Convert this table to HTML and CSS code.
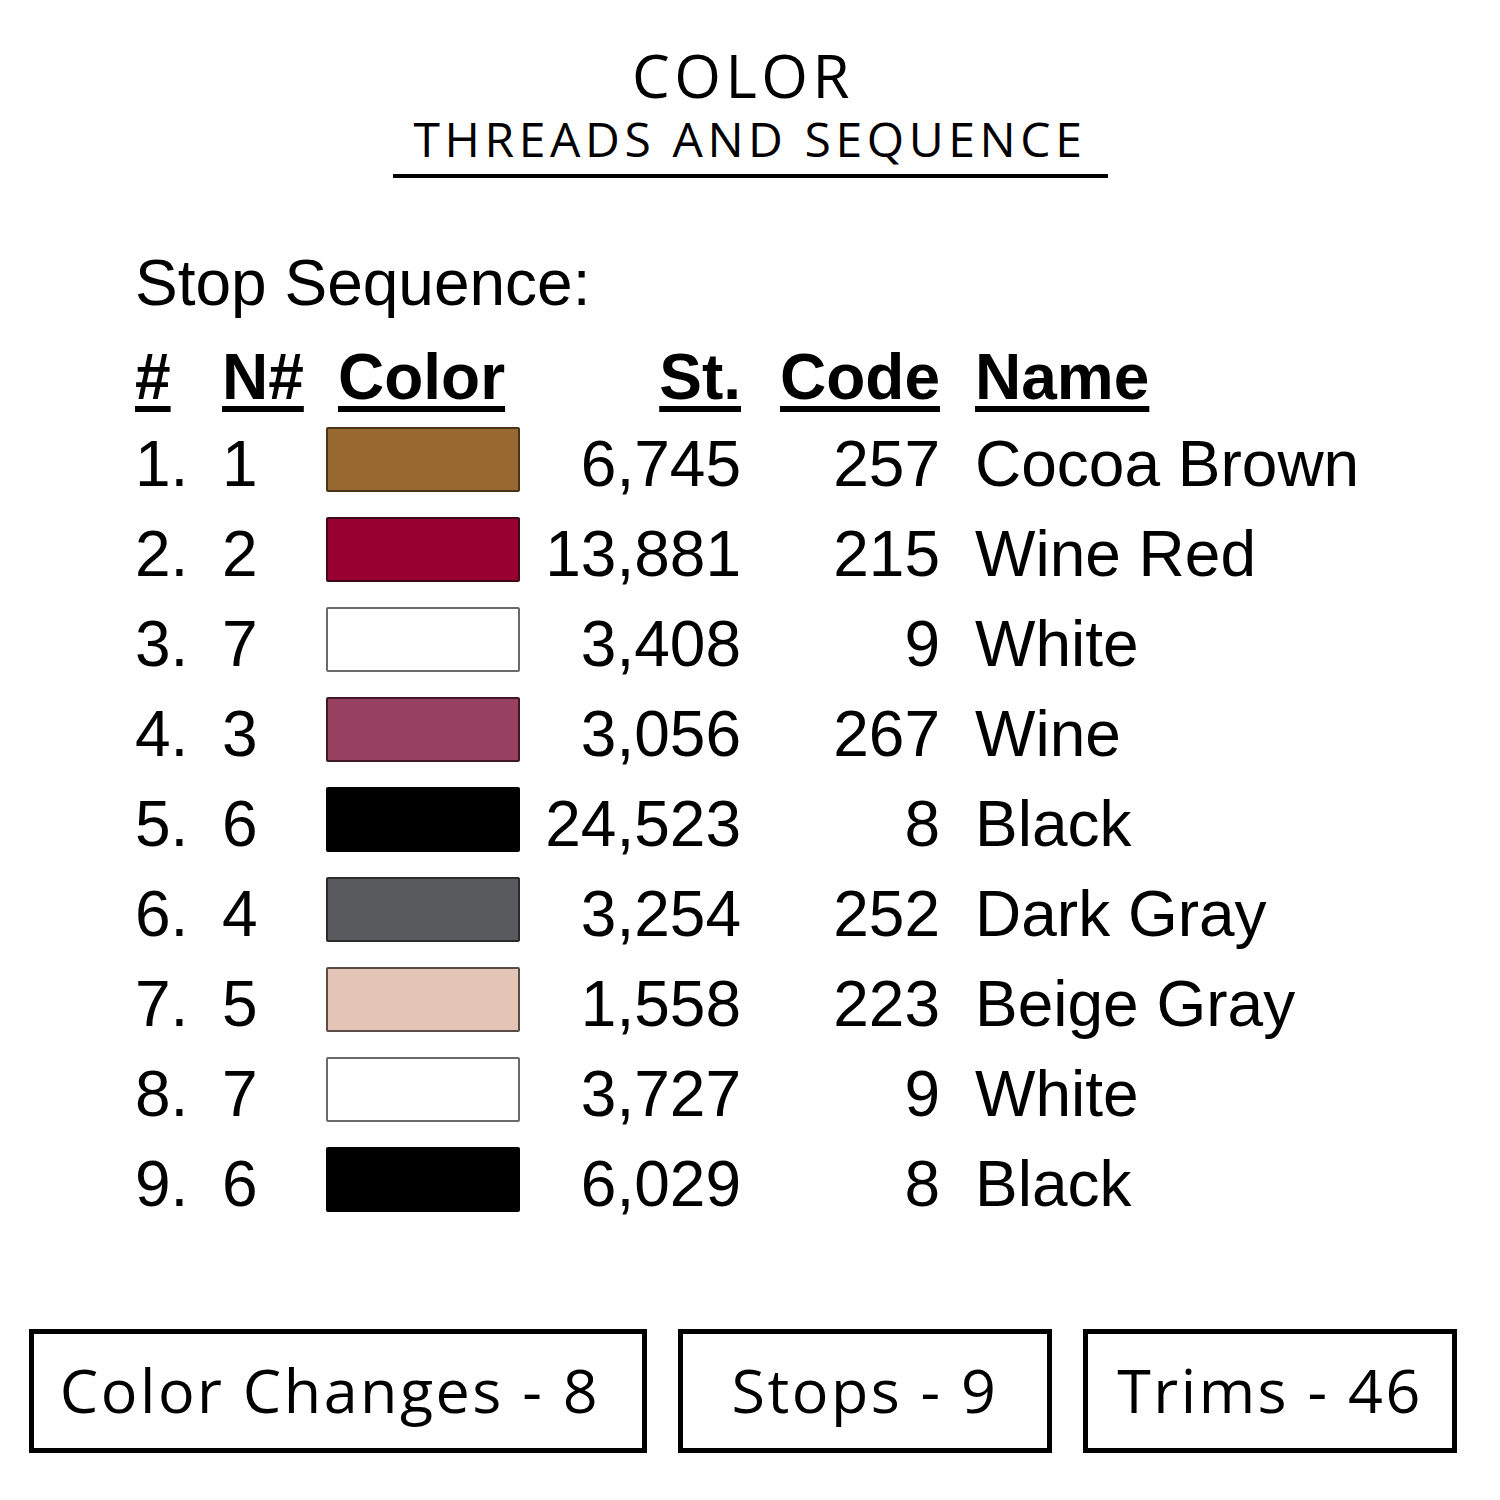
FILE: index.html
```html
<!DOCTYPE html>
<html>
<head>
<meta charset="utf-8">
<link rel="stylesheet" href="styles.css">
</head>
<body>
<div class="page">
  <header class="title">
    <div class="title-main">COLOR</div>
    <div class="title-sub">THREADS AND SEQUENCE</div>
  </header>

  <section class="sequence">
    <div class="seq-label">Stop Sequence:</div>
    <div class="table">
      <div class="row head">
        <span class="c-num"><u>#</u></span>
        <span class="c-n"><u>N#</u></span>
        <span class="c-color"><u>Color</u></span>
        <span class="c-st"><u>St.</u></span>
        <span class="c-code"><u>Code</u></span>
        <span class="c-name"><u>Name</u></span>
      </div>
      <div class="row">
        <span class="c-num">1.</span><span class="c-n">1</span>
        <span class="c-color"><i class="sw sw-brown"></i></span>
        <span class="c-st">6,745</span><span class="c-code">257</span><span class="c-name">Cocoa Brown</span>
      </div>
      <div class="row">
        <span class="c-num">2.</span><span class="c-n">2</span>
        <span class="c-color"><i class="sw sw-winered"></i></span>
        <span class="c-st">13,881</span><span class="c-code">215</span><span class="c-name">Wine Red</span>
      </div>
      <div class="row">
        <span class="c-num">3.</span><span class="c-n">7</span>
        <span class="c-color"><i class="sw sw-white"></i></span>
        <span class="c-st">3,408</span><span class="c-code">9</span><span class="c-name">White</span>
      </div>
      <div class="row">
        <span class="c-num">4.</span><span class="c-n">3</span>
        <span class="c-color"><i class="sw sw-wine"></i></span>
        <span class="c-st">3,056</span><span class="c-code">267</span><span class="c-name">Wine</span>
      </div>
      <div class="row">
        <span class="c-num">5.</span><span class="c-n">6</span>
        <span class="c-color"><i class="sw sw-black"></i></span>
        <span class="c-st">24,523</span><span class="c-code">8</span><span class="c-name">Black</span>
      </div>
      <div class="row">
        <span class="c-num">6.</span><span class="c-n">4</span>
        <span class="c-color"><i class="sw sw-darkgray"></i></span>
        <span class="c-st">3,254</span><span class="c-code">252</span><span class="c-name">Dark Gray</span>
      </div>
      <div class="row">
        <span class="c-num">7.</span><span class="c-n">5</span>
        <span class="c-color"><i class="sw sw-beige"></i></span>
        <span class="c-st">1,558</span><span class="c-code">223</span><span class="c-name">Beige Gray</span>
      </div>
      <div class="row">
        <span class="c-num">8.</span><span class="c-n">7</span>
        <span class="c-color"><i class="sw sw-white"></i></span>
        <span class="c-st">3,727</span><span class="c-code">9</span><span class="c-name">White</span>
      </div>
      <div class="row">
        <span class="c-num">9.</span><span class="c-n">6</span>
        <span class="c-color"><i class="sw sw-black"></i></span>
        <span class="c-st">6,029</span><span class="c-code">8</span><span class="c-name">Black</span>
      </div>
    </div>
  </section>

  <footer class="stats">
    <div class="stat stat-wide">Color Changes - 8</div>
    <div class="stat">Stops - 9</div>
    <div class="stat">Trims - 46</div>
  </footer>
</div>
</body>
</html>
```

FILE: styles.css
```css
html, body {
  margin: 0;
  padding: 0;
  background: #ffffff;
}

.page {
  width: 1500px;
  height: 1500px;
  position: relative;
  color: #000;
}

.title {
  width: 715px;
  margin: 0 auto;
  padding-top: 42px;
  border-bottom: 4px solid #000;
  text-align: center;
  font-family: "Open Sans", "DejaVu Sans", sans-serif;
}

.title-main {
  font-size: 60px;
  line-height: 66px;
  font-weight: 500;
  letter-spacing: 4.5px;
  padding-right: 14px;
}

.title-sub {
  font-size: 48px;
  line-height: 56px;
  font-weight: 400;
  letter-spacing: 4.6px;
  padding-top: 3px;
  padding-bottom: 7px;
}

.sequence {
  padding-left: 135px;
  font-family: "Liberation Sans", Arial, sans-serif;
  font-size: 64px;
}

.seq-label {
  margin-top: 65px;
  line-height: 80px;
}

.table {
  margin-top: 11px;
}

.row {
  display: grid;
  grid-template-columns: 87px 104px 194px 221px 199px auto;
  column-gap: 0;
  height: 90px;
  line-height: 90px;
  align-items: center;
  white-space: nowrap;
}

.row.head {
  font-weight: bold;
  height: 85px;
  line-height: 87px;
}

.row u {
  text-decoration-thickness: 6px;
  text-underline-offset: 7px;
}

.c-num, .c-n, .c-name {
  text-align: left;
}

.head .c-color {
  padding-left: 12px;
}

.c-st, .c-code {
  text-align: right;
}

.c-name {
  padding-left: 35px;
}

.c-color {
  display: flex;
  align-items: center;
}

.sw {
  display: block;
  width: 194px;
  height: 65px;
  box-sizing: border-box;
  border: 2px solid #3a3a3a;
  border-radius: 2px;
  margin-top: -9px;
}

.sw-brown { background: #976930; border-color: #4a3417; }
.sw-winered { background: #990032; border-color: #3e0a17; }
.sw-white { background: #ffffff; border-color: #6a6a6a; }
.sw-wine { background: #984060; border-color: #3e1a27; }
.sw-black { background: #000000; border-color: #000; }
.sw-darkgray { background: #595a5e; border-color: #2b2b2d; }
.sw-beige { background: #e4c4b6; border-color: #5a4b45; }

.stats {
  position: absolute;
  left: 29px;
  top: 1329px;
  display: flex;
  gap: 31px;
  font-family: "Open Sans", "DejaVu Sans", sans-serif;
}

.stat {
  box-sizing: border-box;
  width: 374px;
  height: 124px;
  border: 5px solid #000;
  display: flex;
  align-items: center;
  justify-content: center;
  font-size: 61px;
  line-height: 1;
  letter-spacing: 2.5px;
  padding-bottom: 4px;
}

.stat-wide {
  width: 618px;
  padding-right: 16px;
}
```
